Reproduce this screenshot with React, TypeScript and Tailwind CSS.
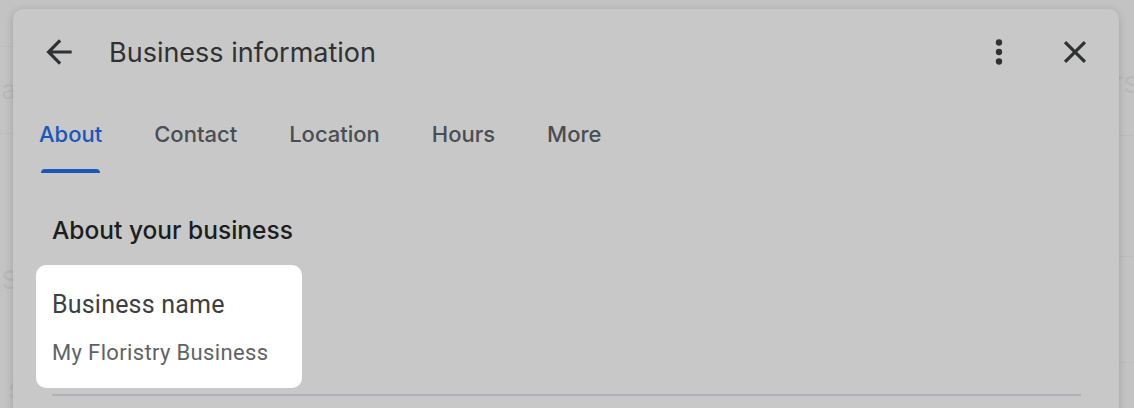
import { ReactNode } from "react";

const tabs = ["About", "Contact", "Location", "Hours", "More"];

const headFont = { fontFamily: "Inter, 'Noto Sans', sans-serif" };

function IconButton({ children }: { children: ReactNode }) {
  return (
    <button type="button" className="flex h-[38px] w-[38px] items-center justify-center text-[#2f3133]">
      {children}
    </button>
  );
}

function PageBehind() {
  // the dimmed page that sits under the dialog, only its edges show
  return (
    <div className="flex h-full w-full justify-between text-[#b9b9b9]" style={headFont}>
      <div className="flex w-[14px] flex-col">
        <div className="h-[47px] border-b border-[#bdbdbd]" />
        <div className="flex h-[87px] items-center justify-end border-b border-[#bdbdbd] text-[26px]">
          <span className="-mr-[18px] whitespace-nowrap">ap</span>
        </div>
        <div className="flex h-[250px] items-center justify-end pt-[36px] text-[34px]">
          <span className="-mr-[16px] whitespace-nowrap">st</span>
        </div>
        <div className="flex justify-end text-[26px]">
          <span className="-mr-[8px] -mt-[14px] whitespace-nowrap">s</span>
        </div>
      </div>
      <div className="flex w-[16px] flex-col">
        <div className="flex h-[136px] items-start border-b border-[#bdbdbd] pt-[60px] text-[30px]">
          <span className="-ml-[6px] whitespace-nowrap">rs</span>
        </div>
        <div className="h-[121px] border-b border-[#bdbdbd]" />
        <div className="h-[106px] border-b border-[#bdbdbd]" />
      </div>
    </div>
  );
}

export default function App() {
  return (
    <div className="relative h-[408px] w-[1134px] overflow-hidden bg-[#c3c3c3]">
      <PageBehind />

      <div className="absolute left-[13px] top-[9px] h-[440px] w-[1106px] rounded-t-[10px] bg-[#c8c8c8] shadow-[0_2px_8px_rgba(0,0,0,0.18)]">
        {/* header */}
        <div className="flex h-[86px] items-center pl-[27px] pr-[25px]">
          <IconButton>
            <svg viewBox="0 0 24 24" className="h-[38px] w-[38px]" fill="currentColor">
              <path d="M20 11H7.83l5.59-5.59L12 4l-8 8 8 8 1.41-1.41L7.83 13H20v-2z" />
            </svg>
          </IconButton>
          <h1 className="ml-[31px] flex-1 text-[27px] font-normal leading-none text-[#2f3133]" style={headFont}>
            Business information
          </h1>
          <IconButton>
            <svg viewBox="0 0 24 24" className="h-[38px] w-[38px]" fill="currentColor">
              <circle cx="12" cy="6" r="2" />
              <circle cx="12" cy="12" r="2" />
              <circle cx="12" cy="18" r="2" />
            </svg>
          </IconButton>
          <div className="w-[38px]" />
          <IconButton>
            <svg viewBox="0 0 24 24" className="h-[38px] w-[38px]" fill="currentColor">
              <path d="M19 6.41 17.59 5 12 10.59 6.41 5 5 6.41 10.59 12 5 17.59 6.41 19 12 13.41 17.59 19 19 17.59 13.41 12z" />
            </svg>
          </IconButton>
        </div>

        {/* tabs */}
        <div className="flex h-[78px]" style={headFont}>
          {tabs.map((tab, i) => (
            <div key={tab} className="flex flex-col px-[26px]">
              <span
                className={`mt-[27px] text-[22px] font-medium leading-[24px] ${
                  i === 0 ? "text-[#1a57b8]" : "text-[#4a4d51]"
                }`}
              >
                {tab}
              </span>
              {i === 0 && <div className="mx-[2px] mt-[23px] h-[4px] rounded-t-[4px] bg-[#1a57b8]" />}
            </div>
          ))}
        </div>

        {/* body */}
        <div className="pl-[39px] pr-[38px]">
          <h2 className="mt-[43px] text-[24.5px] font-medium leading-[28px] text-[#1d1d1d]" style={headFont}>
            About your business
          </h2>
          <div
            className="-ml-[16px] mt-[21px] flex h-[123px] w-[266px] flex-col rounded-[10px] bg-white px-[16px]"
            style={{ fontFamily: "Roboto, 'Noto Sans', sans-serif" }}
          >
            <span className="mt-[26px] text-[25px] leading-[28px] tracking-[0.2px] text-[#3c4043]">Business name</span>
            <span className="mt-[21px] text-[22px] leading-[26px] tracking-[0.35px] text-[#5f6368]">
              My Floristry Business
            </span>
          </div>
          <div className="mt-[6px] h-[2px] bg-[#b2b2b6]" />
        </div>
      </div>
    </div>
  );
}
